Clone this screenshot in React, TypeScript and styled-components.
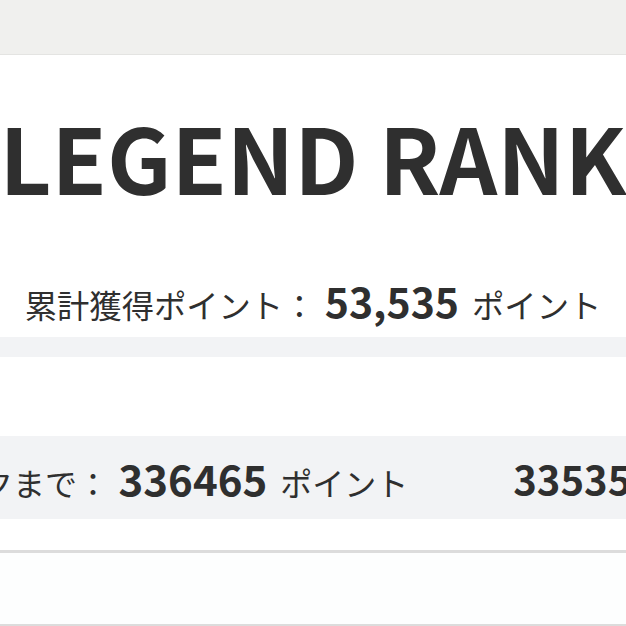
import React from 'react';
import styled, { createGlobalStyle } from 'styled-components';

const GlobalStyle = createGlobalStyle`
  html, body {
    margin: 0;
    padding: 0;
    background: #f2f3f5;
    overflow: hidden;
  }
  body {
    font-family: "Noto Sans CJK JP", "Noto Sans", sans-serif;
    color: #2f2f2f;
  }
`;

const Page = styled.div`
  width: 626px;
  height: 626px;
  overflow: hidden;
  display: flex;
  flex-direction: column;
`;

const Header = styled.header`
  flex: none;
  height: 54px;
  background: #f0f0ee;
  border-bottom: 1px solid #e4e4e2;
`;

const Main = styled.main`
  display: flex;
  justify-content: center;
`;

const Column = styled.div`
  flex: none;
  width: 940px;
  display: flex;
  flex-direction: column;
  gap: 20px;
`;

const Panel = styled.div`
  display: flex;
  flex-direction: column;
`;

const Card = styled.section`
  background: #ffffff;
`;

const RankCard = styled(Card)`
  height: 282px;
  display: flex;
  flex-direction: column;
  align-items: center;
`;

const RankTitle = styled.h1`
  margin: 56px 0 0;
  font-size: 90px;
  line-height: 1;
  font-weight: 700;
  white-space: nowrap;
`;

const TotalLine = styled.p`
  margin: 79px 0 0;
  font-size: 32.3px;
  line-height: 1;
  white-space: nowrap;
  display: flex;
  align-items: baseline;
`;

const BigNumber = styled.strong<{ size?: number }>`
  font-size: ${p => p.size ?? 41}px;
  font-weight: 700;
  margin-right: 13px;
`;

const NextCard = styled(Card)`
  padding-top: 79px;
  height: 114px;
  border-bottom: 3px solid #dcdcdc;
`;

const NextRow = styled.div`
  height: 83px;
  background: #f2f3f5;
  display: flex;
  align-items: center;
  padding: 0 10px;
  gap: 105px;
  white-space: nowrap;
`;

const RowLabel = styled.span`
  font-size: 32px;
  line-height: 1;
  display: flex;
  align-items: baseline;
`;

const HistoryCard = styled(Card)`
  background: #fdfefe;
  height: 71px;
  border-bottom: 2px solid #dcdcdc;
`;

export default function App() {
  return (
    <>
      <GlobalStyle />
      <Page>
        <Header />
        <Main>
          <Column>
            <RankCard>
              <RankTitle>LEGEND RANK</RankTitle>
              <TotalLine>
                累計獲得ポイント：<BigNumber>&nbsp;53,535</BigNumber>ポイント
              </TotalLine>
            </RankCard>
            <Panel>
              <NextCard>
                <NextRow>
                  <RowLabel>
                    次のランクまで：<BigNumber size={42}>&nbsp;336465</BigNumber>ポイント
                  </RowLabel>
                  <RowLabel>
                    <BigNumber size={40}>335350</BigNumber>ポイント
                  </RowLabel>
                </NextRow>
              </NextCard>
              <HistoryCard />
            </Panel>
          </Column>
        </Main>
      </Page>
    </>
  );
}
